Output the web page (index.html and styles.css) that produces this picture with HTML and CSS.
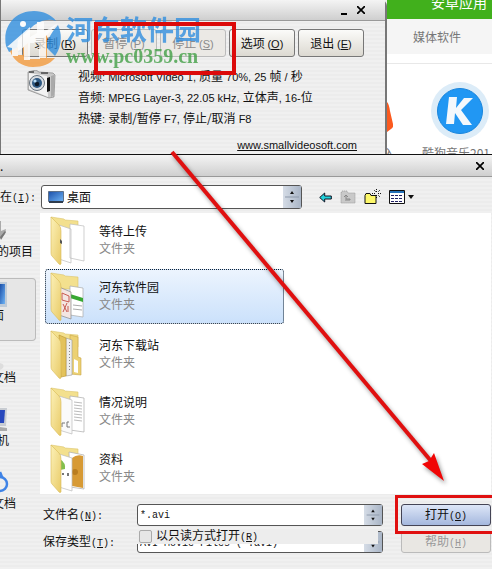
FILE: index.html
```html
<!DOCTYPE html>
<html lang="zh-CN">
<head>
<meta charset="utf-8">
<title>桌面</title>
<link rel="stylesheet" href="styles.css">
</head>
<body>
<svg class="defs" width="0" height="0" aria-hidden="true">
  <defs>
    <linearGradient id="fold" x1="0" y1="0" x2="1" y2="1"><stop offset="0" stop-color="#fcf1b8"/><stop offset="1" stop-color="#e9cb68"/></linearGradient>
    <linearGradient id="screen" x1="0" y1="0" x2="1" y2="1"><stop offset="0" stop-color="#1b4fa8"/><stop offset="1" stop-color="#6fb4f5"/></linearGradient>
    <symbol id="spin" viewBox="0 0 18 22"><path fill="#111" d="M9 5l2 3H7zM9 17l2-3H7z"/><path stroke="#8d99aa" d="M2 11h14"/></symbol>
    <symbol id="back" viewBox="0 0 37 50"><path fill="#f3e08e" stroke="#dcc46c" stroke-width=".6" d="M1 1l13 2 1 1 13 1v12H8z"/></symbol>
    <symbol id="front" viewBox="0 0 37 50"><path fill="url(#fold)" stroke="#d8ba58" stroke-width=".6" d="M1 1l8 8q2 2 2 6v33q-1 1-2 0L2 40q-1-1-1-3z"/></symbol>
  </defs>
</svg>

<div class="top">
  <section class="recorder">
    <header class="bar">
      <button class="win" aria-label="最小化"><svg width="8" height="10" viewBox="0 0 8 10"><path d="M1 9h6" stroke="#000" stroke-width="2"/></svg></button>
      <button class="win" aria-label="关闭"><svg width="8" height="8" viewBox="0 0 8 8"><path d="M0 0l8 8M8 0L0 8" stroke="#000" stroke-width="1.7"/></svg></button>
    </header>
    <div class="tools">
      <button class="tool">录制 <span class="lat">(<u>R</u>)</span></button>
      <div class="marked">
        <button class="tool" disabled>暂停 <span class="lat">(<u>P</u>)</span></button>
        <button class="tool" disabled>停止 <span class="lat">(<u>S</u>)</span></button>
      </div>
      <button class="tool">选项 <span class="lat">(<u>O</u>)</span></button>
      <button class="tool">退出 <span class="lat">(<u>E</u>)</span></button>
    </div>
    <div class="info">
      <svg class="camera" width="30" height="29" viewBox="0 0 30 29">
        <path fill="#c9c9c9" stroke="#777" stroke-width=".6" d="M1 2l8-2 3 2 14 1 2 2-1 22-5 1L1 20z"/>
        <path fill="#f3f3f3" d="M2 3l18 3 1 21L2 19z"/><path fill="#666" d="M2 1h5v2H2zM14 2h7v2h-7z"/>
        <path fill="#111" d="M20 8l3-1v14l-3 1z"/><path fill="#aaa" d="M24 6l3-1v20l-3 2z"/>
        <circle cx="10" cy="13" r="7.5" fill="#d8dde2" stroke="#66717c"/><circle cx="10" cy="13" r="5" fill="#2d5882"/><circle cx="10" cy="14" r="2.3" fill="#0c1a2a"/><circle cx="8" cy="11" r="1.6" fill="#b8dcf5"/>
      </svg>
      <div class="lines">
        <p>视频<span class="lat">: Microsoft Video 1, </span>质量<span class="lat"> 70%, 25 </span>帧<span class="lat"> / </span>秒</p>
        <p>音频<span class="lat">: MPEG Layer-3, 22.05 kHz, </span>立体声<span class="lat">, 16-</span>位</p>
        <p>热键<span class="lat">: </span>录制/暂停<span class="lat"> F7, </span>停止/取消<span class="lat"> F8</span></p>
      </div>
    </div>
    <a class="site-link" href="#">www.smallvideosoft.com</a>
  </section>
  <section class="site">
    <div class="green">安卓应用</div>
    <div class="cat">媒体软件</div>
    <div class="apps">
      <div class="app-cut"><svg width="6" height="30" viewBox="0 0 6 30"><path fill="#fb5a1f" d="M0 0q2 2 3 9l3 13q1 3-2 5l-4 3z"/></svg><span>入</span></div>
      <div class="app">
        <svg width="60" height="60" viewBox="0 0 60 60"><circle cx="30" cy="30" r="29" fill="#dcecf8"/><circle cx="30" cy="30" r="22.5" fill="#2197f3" stroke="#1784dc"/><path fill="#f4f8fc" d="M19 16h8l-1 11 8-10h9L31 29l11 15h-9l-8-12-1 11h-8z"/></svg>
        <span>酷狗音乐201</span>
      </div>
    </div>
  </section>
</div>

<section class="dialog">
  <header class="bar">
    <span class="dot">.</span>
    <button class="win" aria-label="关闭窗口"><svg width="8" height="8" viewBox="0 0 8 8"><path d="M0 0l8 8M8 0L0 8" stroke="#000" stroke-width="1.7"/></svg></button>
  </header>
  <div class="look">
    <label for="place">在<span class="mono">(<u>I</u>):</span></label>
    <div class="combo place">
      <svg class="desk" width="16" height="13" viewBox="0 0 16 13"><path fill="url(#screen)" stroke="#5f7188" d="M.5.5h15v10H.5z"/><path fill="#2f3c4d" d="M1 10h14v2H1z"/></svg>
      <select id="place"><option>桌面</option></select>
      <svg class="spin" width="18" height="22"><use href="#spin"/></svg>
    </div>
    <div class="nav">
      <button aria-label="后退"><svg width="13" height="11" viewBox="0 0 13 11"><path fill="#22d3dc" stroke="#112" d="M.7 5.5l5-4.5v3h6.600v3H5.700v3z"/></svg></button>
      <button aria-label="向上一级" disabled><svg width="16" height="14" viewBox="0 0 16 14"><path fill="#c9c9c9" stroke="#9b9b9b" stroke-dasharray="1 1" d="M1 3l1-2h5l1 2h7v10H1z"/><path fill="none" stroke="#888" d="M5 10h5V9H6V5M4 7l2-2 2 2"/></svg></button>
      <button aria-label="新建文件夹"><svg width="17" height="16" viewBox="0 0 17 16"><path fill="#fdf86a" stroke="#111" d="M1 14.500V6.500l1-2h4l1 2h5v8z"/><path stroke="#111" stroke-dasharray="1 1" d="M12.500 0v3M12.500 6v3M8 4.500h3M14 4.500h3M10 1l2 2M16 1l-2 2M16 8l-2-2"/></svg></button>
      <button aria-label="查看"><svg width="26" height="14" viewBox="0 0 26 14"><path fill="#fff" stroke="#111" d="M.5.5h15v13H.5z"/><path fill="#2470b8" d="M1 1h14v2H1z"/><path stroke="#226" stroke-dasharray="3 1" d="M2 5.500h12M2 8.500h12M2 11.500h12"/><path fill="#111" d="M19 5h6l-3 4z"/></svg></button>
    </div>
  </div>

  <div class="main">
    <nav class="places">
      <a class="place-item" href="#"><svg width="36" height="26" viewBox="0 0 36 26"><path fill="#aaa" d="M0 3l1 0v10l5-2-1 5-6 6z"/><path fill="#777" d="M0 19l5-6 1 1-5 8z"/></svg><span>的项目</span></a>
      <a class="place-item on" href="#"><svg width="36" height="26" viewBox="0 0 36 26"><path fill="#bfcbd8" d="M0 0h7v25H0z"/><path fill="url(#screen)" d="M0 2h5v20H0z"/></svg><span>面</span></a>
      <a class="place-item docs" href="#"><svg width="36" height="26" viewBox="0 0 36 26"><path fill="#ddd" d="M0 19q5 1 3 5l-3 2z"/></svg><span>文档</span></a>
      <a class="place-item" href="#"><svg width="36" height="26" viewBox="0 0 36 26"><path fill="#c8ccd2" d="M0 1h7l-1 18H0z"/><path fill="#2848bd" d="M0 3h5l-1 13H0z"/><path fill="#aaa" d="M0 20l7 1v3H0z"/></svg><span>机</span></a>
      <a class="place-item docs" href="#"><svg width="36" height="26" viewBox="0 0 36 26"><path fill="none" stroke="#3f83e6" stroke-width="2.500" d="M0 2l2 5M0 7a7 7 0 0 1 0 14"/></svg><span>文档</span></a>
    </nav>
    <ul class="files">
      <li><svg width="37" height="50" viewBox="0 0 37 50"><use href="#back"/><path fill="#fff" stroke="#bbb" stroke-width=".7" d="M20 8l14 2v35l-14-3zM9 9l12 4v34l-12-4z"/><use href="#front"/><path fill="#555" d="M10 23l2 2v3l-2-1z"/></svg><div><b>等待上传</b><i>文件夹</i></div></li>
      <li class="sel"><svg width="37" height="50" viewBox="0 0 37 50"><use href="#back"/><path fill="#fff" stroke="#aaa" stroke-width=".7" d="M20 14l13 2v29l-13-2z"/><path fill="#38a832" d="M20 22l13 4v4l-13-4z"/><path stroke="#aaa" d="M23 33l9 1M23 37l9 1"/><path fill="#f4e6e2" stroke="#888" stroke-width=".7" d="M9 15l12 5v27L9 43z"/><path fill="none" stroke="#c85a50" d="M12 21l7 3v6l-7-2zM13 32l4 8M17 31l-4 9M18 34v6"/><use href="#front"/></svg><div><b>河东软件园</b><i>文件夹</i></div></li>
      <li><svg width="37" height="50" viewBox="0 0 37 50"><use href="#back"/><path fill="#ecd173" stroke="#c9a646" stroke-width=".6" d="M20 5l8 2v20l3 1v17l-11-1z"/><path fill="#fff" d="M24 29l4 2v12l-4-1z"/><path fill="#eee" stroke="#999" stroke-width=".6" d="M16 8l6 2v35l-6 1z"/><path stroke="#888" stroke-dasharray="1 2" d="M19.500 12v30"/><path fill="#e3c25b" stroke="#b99334" stroke-width=".6" d="M9 5l7 3v38l-5 1z"/><use href="#front"/></svg><div><b>河东下载站</b><i>文件夹</i></div></li>
      <li><svg width="37" height="50" viewBox="0 0 37 50"><use href="#back"/><path fill="#fff" stroke="#aaa" stroke-width=".7" d="M20 9l14 2v34l-14-2z"/><path stroke="#bbb" d="M24 15l8 1M24 18l8 1M24 21l8 1M24 24l8 1M24 27l8 1M24 30l8 1M24 33l8 1"/><path fill="#fafafa" stroke="#bbb" stroke-width=".7" d="M9 9l13 4v34l-13-4z"/><path fill="none" stroke="#777" d="M15 36h-3v4M19 35h-2v5h3"/><use href="#front"/></svg><div><b>情况说明</b><i>文件夹</i></div></li>
      <li><svg width="37" height="50" viewBox="0 0 37 50"><use href="#back"/><path fill="#fff" stroke="#aaa" stroke-width=".7" d="M19 8l15 3v34l-14-2z"/><path fill="#d79a35" d="M22 14q5-4 11-2v32l-11-2z"/><circle cx="25" cy="28" r="3" fill="#b97d20"/><path fill="#fff" stroke="#bbb" stroke-width=".7" d="M9 10l13 4v33l-13-4z"/><path fill="#83bf4d" d="M10 15q6 4 5 10l-5 1z"/><path fill="#777" d="M12 29h2v2h-2zM17 29h2v3h-2z"/><use href="#front"/></svg><div><b>资料</b><i>文件夹</i></div></li>
    </ul>
    <form class="form">
      <label for="name">文件名<span class="mono">(<u>N</u>):</span></label>
      <div class="combo"><input id="name" type="text" value="*.avi"><svg class="spin" width="18" height="20"><use href="#spin"/></svg></div>
      <div class="act"><button type="button" class="go">打开<span class="mono">(<u>O</u>)</span></button></div>
      <label for="type">保存类型<span class="mono">(<u>T</u>):</span></label>
      <div class="combo"><select id="type"><option>AVI Movie Files (*.avi)</option></select><svg class="spin" width="18" height="20"><use href="#spin"/></svg>
        <label class="readonly"><input type="checkbox"><span>以只读方式打开<span class="mono">(<u>R</u>)</span></span></label>
      </div>
      <div class="act-help"><button type="button" class="go" disabled>帮助<span class="mono">(<u>H</u>)</span></button></div>
    </form>
  </div>
</section>

<div class="watermark">
  <svg width="56" height="57" viewBox="0 0 56 57">
    <path fill="#318fdf" d="M1 36C-3 15 11 1 29 1c9 0 18 4 22 10-8-3-17 0-24 6L13 30l-1 9-8 3z"/>
    <path fill="#318fdf" d="M53 15c5 11 3 23-3 31l-9-9c1-7 5-14 12-22z"/>
    <path fill="#f39a3d" d="M5 41l8-4v8h5v-8l5-4v16h12V30l7-5v23h8c-5 6-12 9-22 9C17 57 8 50 5 41z"/>
    <path fill="#fff" d="M2 37L25 17v10l7-4V12h7v10l14-9-12 13v22h-7V33h-9v17h-6V37l-6 4v5h-6v-8z" opacity=".9"/><circle cx="18" cy="14" r="3" fill="#fff"/>
  </svg>
  <div class="wm-text"><strong>河东软件园</strong><span>www.pc0359.cn</span></div>
</div>
<svg class="arrow" width="290" height="345" viewBox="0 0 290 345">
  <g class="shade"><path d="M7 9l259 309" stroke="#e01010" stroke-width="4"/><path fill="#f00505" d="M279 338l-22-17 7-3 5-8z"/></g>
</svg>
</body>
</html>
```
FILE: styles.css
```css
* { box-sizing: border-box; }
body {
  margin: 0;
  position: relative;
  overflow: hidden;
  min-height: 100vh;
  display: flex;
  flex-direction: column;
  background: #eee;
  color: #111;
  font: 12px/16px "Noto Sans CJK SC", sans-serif;
}
button, input, select { font: inherit; color: inherit; margin: 0; }
p, ul { margin: 0; padding: 0; list-style: none; }
a { color: inherit; text-decoration: none; }
svg { display: block; flex: none; }
.defs { position: absolute; }
.lat { font: 11px/16px "Liberation Sans", sans-serif; white-space: pre; }
.mono { font: 10px/16px "Liberation Mono", monospace; }

.top { display: flex; height: 154px; overflow: hidden; }
.recorder {
  flex: 0 0 387px;
  border: solid #777;
  border-width: 0 2px 0 1px;
  border-top-right-radius: 6px;
  background: repeating-linear-gradient(#f0f0f0 0 2px, #ececec 2px 4px);
}
.bar {
  display: flex;
  align-items: center;
  justify-content: flex-end;
  gap: 9px;
  height: 21px;
  padding-right: 20px;
  background: linear-gradient(#f4f4f4, #cfcfcf);
  border-bottom: 1px solid #999;
}
.win { padding: 0; border: 0; background: none; }
.tools { display: flex; gap: 3px; padding: 8px 20px 0 21px; }
.marked { position: relative; display: flex; gap: 3px; }
.marked::after {
  content: "";
  position: absolute;
  z-index: 2;
  inset: -7px -10px -18px 3px;
  border: 4px solid #dc0a0a;
}
.tool {
  width: 66px;
  height: 28px;
  padding: 0;
  border: 1px solid #777;
  border-radius: 3px;
  background: linear-gradient(#fbfbf9, #dcd9d1);
  white-space: nowrap;
}
.tool:disabled { color: #8b8b8b; border-color: #bbb; background: #ebe9e5; }
.info { display: flex; gap: 21px; padding: 8px 0 0 26px; }
.camera { margin-top: 5px; }
.lines p { line-height: 21px; white-space: nowrap; }
.site-link {
  display: block;
  margin: 9px 28px 0 0;
  text-align: right;
  text-decoration: underline;
  font: 11px/16px "Liberation Sans", sans-serif;
}
.site { flex: 1; min-width: 0; background: #fff; color: #777; }
.green { height: 19px; padding-left: 44px; background: #41b01c; color: #fff; font-size: 14px; line-height: 4px; white-space: nowrap; }
.cat { height: 35px; padding-left: 26px; background: #f5f5f5; line-height: 35px; }
.apps { display: flex; gap: 27px; margin-top: 9px; padding-top: 17px; border-top: 1px solid #e8e8e8; white-space: nowrap; }
.apps span { display: block; }
.app { flex: none; display: grid; gap: 4px; }
.app svg { margin-left: 8px; }
.app-cut { width: 8px; display: grid; gap: 13px; padding-top: 21px; }
.app-cut span { margin-left: -4px; }

.dialog { flex: 1; display: flex; flex-direction: column; border-top: 1px solid #111; background: repeating-linear-gradient(#f0f0f0 0 2px, #ececec 2px 4px); }
.dialog .bar { flex: none; height: 22px; padding-right: 8px; justify-content: space-between; }
.look { display: grid; grid-template-columns: 41px 261px 1fr; align-items: center; padding-top: 8px; white-space: nowrap; }
.combo {
  position: relative;
  display: flex;
  align-items: center;
  border: 1px solid #555;
  border-radius: 3px;
  background: #fff;
  height: 22px;
}
.combo.place { height: 24px; padding-left: 6px; }
.combo select, .combo > input { appearance: none; flex: 1; min-width: 0; height: 100%; padding: 0 2px; border: 0; background: none; outline: 0; }
.combo.place select { padding-left: 3px; }
.form .combo select, .form .combo > input { font: 10px/16px "Liberation Mono", monospace; }
.spin { background: linear-gradient(90deg, #d5dce6, #a9b5c6); }
.nav { display: flex; align-items: center; gap: 8px; padding-left: 17px; }
.nav button { padding: 0; border: 0; background: none; }
.main { display: grid; grid-template-columns: 40px 1fr; grid-template-rows: 281px auto; padding: 4px 1px 0 0; }
.places { grid-row: 1 / 3; padding-top: 2px; overflow: hidden; margin-right: 4px; }
.place-item { display: block; height: 63px; padding-top: 3px; white-space: nowrap; }
.place-item span { display: block; margin: 0 0 0 -3px; line-height: 14px; }
.place-item.on { border: 1px solid #bbb; border-left: 0; border-radius: 0 4px 4px 0; background: #e6e6e6; }
.place-item.on span { margin-left: -8px; }
.place-item.docs span { margin-left: -8px; }
.files { background: #fff; padding: 0 5px; }
.files li { display: flex; gap: 12px; height: 57px; padding: 3px 5px; max-width: 239px; }
.files li.sel { height: 55px; margin: -1px 0 3px; border: 1px dotted #123; border-radius: 3px; padding: 2px 4px; background: linear-gradient(#ecf4fe, #cbe1fb); }
.files b, .files i { display: block; font-style: normal; font-weight: 400; line-height: 17px; }
.files div { padding-top: 6px; }
.files i { color: #888; }
.form { display: grid; grid-template-columns: 94px 246px 1fr; row-gap: 5px; padding: 10px 0 0 3px; align-items: center; white-space: nowrap; }
.act, .act-help { position: relative; padding-left: 18px; }
.act::after { content: ""; position: absolute; z-index: 2; inset: -9px -4px -8px 12px; border: 3px solid #e01010; }
.go { width: 100%; height: 22px; padding: 0; border: 1px solid #445; border-radius: 3px; background: linear-gradient(#dde6f7, #a5b8de); }
.go:disabled { color: #999; border-color: #bbb; background: #e9e7e3; }
.form .combo select { padding-top: 4px; }
.readonly { position: absolute; left: -1px; top: -3px; display: flex; align-items: center; gap: 4px; width: 241px; height: 15px; padding-left: 2px; background: #ededed; }
.readonly input { appearance: none; width: 13px; height: 13px; border: 1px solid #aaa; border-radius: 2px; background: #e6e6e6; }

.watermark { position: absolute; left: 5px; top: 10px; display: flex; gap: 5px; opacity: .8; pointer-events: none; }
.wm-text { padding-top: 2px; }
.wm-text strong { display: block; color: #318fdf; font-size: 27px; line-height: 34px; }
.wm-text span { display: block; color: #43a047; font: bold 20px/20px "Liberation Serif", serif; }
.arrow { position: absolute; left: 165px; top: 143px; pointer-events: none; }
.shade { filter: drop-shadow(2px 3px 2px rgba(0, 0, 0, .4)); }
```
